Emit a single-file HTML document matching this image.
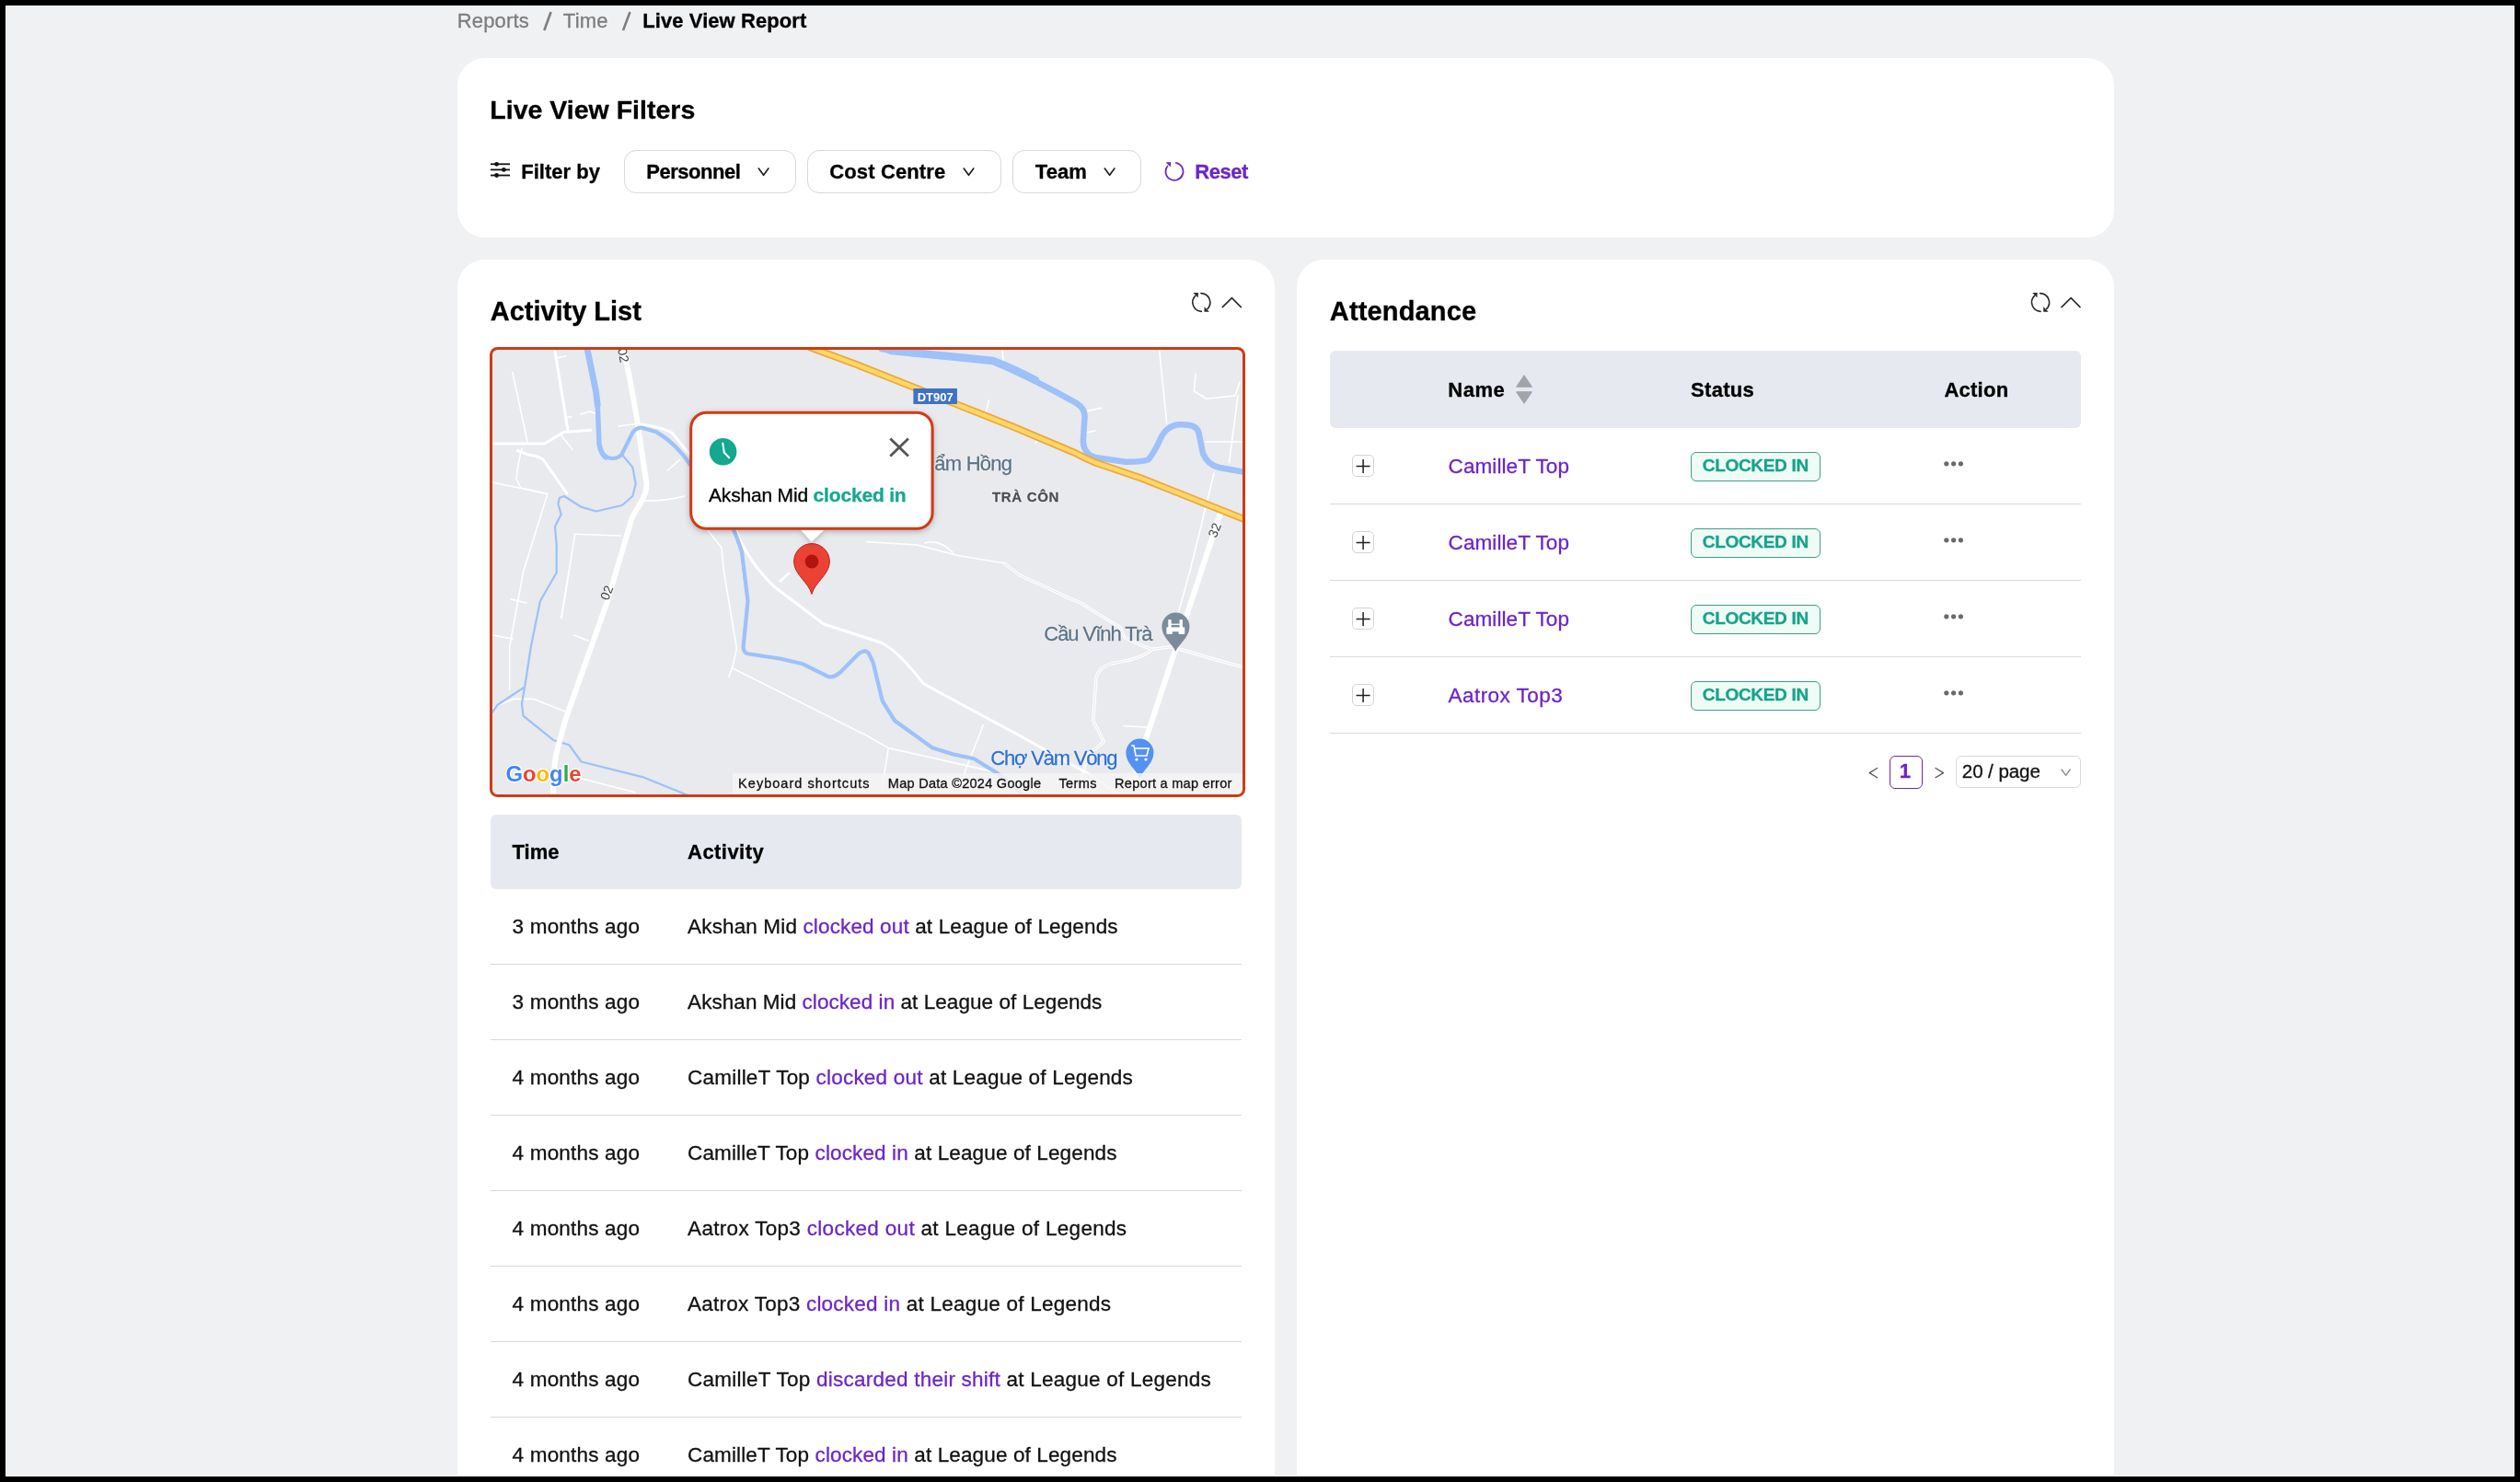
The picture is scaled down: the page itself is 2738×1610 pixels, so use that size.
<!DOCTYPE html>
<html><head><meta charset="utf-8">
<style>
html,body{margin:0;padding:0;}
body{width:2738px;height:1610px;background:#000;position:relative;overflow:hidden;font-family:'Liberation Sans',sans-serif;}
#pg{will-change:transform;position:absolute;left:0;top:0;width:2738px;height:1610px;background:#f0f1f3;clip-path:inset(7px 7px 7px 7px);overflow:hidden;}
#fr{position:absolute;left:6px;top:6px;width:2726px;height:1598px;box-sizing:border-box;border:1px solid #fff;}
.t{position:absolute;line-height:0;white-space:nowrap;-webkit-text-stroke:0.3px currentColor;font-family:'Liberation Sans',sans-serif;}
.abs{position:absolute;}
.card{position:absolute;background:#fff;border-radius:30px;}
.btn{position:absolute;box-sizing:border-box;border:1.5px solid #d9d9d9;border-radius:13px;background:#fff;height:47px;top:162.5px;}
.hdr{position:absolute;background:#e6eaf0;border-radius:6px;}
.dv{position:absolute;height:1.2px;background:#dadada;}
.pbox{position:absolute;box-sizing:border-box;width:24px;height:23.5px;border:1.2px solid #d4d4d4;border-radius:5px;background:#fff;}
.badge{position:absolute;box-sizing:border-box;width:141px;height:32px;border:1.6px solid #3f9d8c;border-radius:6px;background:#effcf6;}
svg{position:absolute;overflow:visible;}
</style></head><body>
<div id="pg">
<svg style="left:0;top:0" width="1" height="1"><g stroke="#7d7d7d" stroke-width="2.6" stroke-linecap="butt"><line x1="591.3" y1="33" x2="598.6" y2="13"/><line x1="677" y1="33" x2="684.5" y2="13"/></g></svg>
<!-- filter card -->
<div class="card" style="left:497px;top:63px;width:1800px;height:195px;"></div>
<svg style="left:0;top:0" width="1" height="1">
 <g stroke="#111" stroke-width="1.8" fill="none">
  <line x1="533" y1="178.3" x2="554" y2="178.3"/>
  <line x1="533" y1="184.4" x2="554" y2="184.4"/>
  <line x1="533" y1="190.5" x2="554" y2="190.5"/>
 </g>
 <g fill="#111">
  <circle cx="539.6" cy="178.3" r="2.4"/>
  <circle cx="547.4" cy="184.4" r="2.4"/>
  <circle cx="539.6" cy="190.5" r="2.4"/>
 </g>
</svg>
<div class="btn" style="left:678px;width:186.6px;"></div>
<div class="btn" style="left:877.3px;width:210.4px;"></div>
<div class="btn" style="left:1100px;width:140.4px;"></div>
<svg style="left:0;top:0" width="1" height="1">
 <g stroke="#1a1a1a" stroke-width="1.6" fill="none" stroke-linecap="round" stroke-linejoin="round">
  <polyline points="824.3,183 829.6,190.3 834.9,183"/>
  <polyline points="1047.2,183 1052.5,190.3 1057.8,183"/>
  <polyline points="1200.3,183 1205.6,190.3 1210.9,183"/>
 </g>
 <!-- reset icon -->
 <path d="M1277.2,176.9 A9.5,9.5 0 1 1 1268.9,180.0" stroke="#6d26c6" stroke-width="1.8" fill="none"/>
 <polygon points="1266.6,176.2 1272.2,176.2 1271.8,181.6" fill="#6d26c6"/>
</svg>

<!-- activity card -->
<div class="card" style="left:497px;top:282px;width:888px;height:1450px;"></div>
<!-- attendance card -->
<div class="card" style="left:1409px;top:282px;width:888px;height:1450px;"></div>

<svg style="left:0;top:0" width="1" height="1">
 <defs>
  <g id="rf">
   <path d="M9.6,0.6 A10,10 0 0 1 16.6,17.6" stroke="#2b2b2b" stroke-width="1.6" fill="none" stroke-linecap="round"/>
   <path d="M10,20.4 A10,10 0 0 1 3.4,3.4" stroke="#2b2b2b" stroke-width="1.6" fill="none" stroke-linecap="round"/>
   <polygon points="1.2,0.1 6.6,0.1 6.4,5.6" fill="#2b2b2b"/>
   <polygon points="13.2,15.2 13.2,20.7 18.6,20.7" fill="#2b2b2b"/>
  </g>
  <polyline id="cu" points="0,10 10.1,0 20,10" stroke="#2b2b2b" stroke-width="1.6" fill="none" stroke-linecap="round" stroke-linejoin="round"/>
 </defs>
 <use href="#rf" x="1295.3" y="318"/>
 <use href="#cu" x="1328.3" y="323.6"/>
 <use href="#rf" x="2207" y="318"/>
 <use href="#cu" x="2240" y="323.6"/>
</svg>

<svg style="left:532px;top:377px" width="821" height="489" viewBox="532 377 821 489">
 <defs>
  <clipPath id="mc"><rect x="532" y="377" width="821" height="489" rx="8" ry="8"/></clipPath>
  <filter id="sh" x="-10%" y="-10%" width="120%" height="130%"><feDropShadow dx="0" dy="2" stdDeviation="3" flood-color="#000" flood-opacity="0.25"/></filter>
 </defs>
 <g clip-path="url(#mc)">
  <rect x="532" y="377" width="821" height="489" fill="#e8eaed"/>
  <!-- thin roads -->
  <g stroke="#fff" stroke-width="1.6" fill="none" stroke-linejoin="round" stroke-linecap="round">
   
   <path d="M556.8,404.3 L573.3,481.2"/>
   
   <path d="M609.7,472.9 L622.1,488.6"/>
   <path d="M603,389 L615,387"/>
   <path d="M614,453 L621,453"/>
   
   <path d="M567,487 Q565,495 563,505 L561,520 L566,530 L594.8,536.5 L568.4,622 L553.6,703 L553.6,749.5"/>
   <path d="M535,524 L594.8,536.5"/>
   <path d="M624.6,580.3 L674.2,582"/>
   <path d="M624.6,580.3 L618,622 L610,671"/>
   <path d="M697.3,544 Q720,545 743.6,539"/>
   <path d="M725.4,511 L738.6,499.3"/>
   <path d="M672,463 L695,460"/>
   
   <path d="M618.3,620 L610,671.5"/>
   <path d="M631,450 L641,447 L649,450"/>
   <path d="M535,769 L556.9,759.4 L580.1,759.4 L613.4,772.7"/>
   <path d="M631.6,845.8 L689.7,860.7"/>
   <path d="M535,690 L557,694"/>
   <path d="M555,651 L572,655"/>
   <path d="M624,690 L639,696"/>
   <path d="M769,576 L784,595 L786,618 L800.4,704.5 L796.2,723.1 L792,735"/>
   <path d="M796,726 L942,799.3 L965.2,812.6 L1083.1,839.1 L1130,866"/>
   <path d="M965.2,812.6 L957,866"/>
   <path d="M1068.2,787.7 L1041.6,855.7"/>
   
   
   
   <path d="M1220.9,788.5 L1247.4,790.2"/>
   <path d="M942,588.6 L996.6,592 L1041,603.5 L1090.8,611.7"/>
   <path d="M1259.4,378 L1267.7,459.7"/>
   <path d="M1299,406.8 L1297.4,425 L1310.7,433.2 L1342,429.9 L1347,415"/>
   <path d="M1345,430 L1335.5,502.6"/>
   <path d="M1319,514.2 L1292.5,622 L1280.6,664.8"/>
   <path d="M1089,378 L1090,392"/>
   <path d="M1074.3,434.9 L1071,449.7"/>
   <path d="M1181.7,446.4 L1196.6,443.1"/>
   <path d="M1310,480 L1353,480"/>
   <path d="M1180,470 L1190,468"/>
   <path d="M1127,478 L1125,482"/>
   <path d="M1005,590 Q1020,585 1035,600"/>
  </g>
  <g fill="none" stroke-linejoin="round" stroke-linecap="round">
   <path d="M1091.4,612 L1108,625 L1141.2,640 L1161.6,650 L1175.5,655.5 L1194,667.6 L1217,681.4 L1221.7,692.5 L1235.5,699 L1251.2,705.5 Q1245,714 1214.2,719.6 Q1195,722 1191,736.2 L1187.7,782.7 L1199.3,806 L1182.7,819.2 L1175,845 M1251.2,705.5 L1271.6,702.7 L1282.7,705.5 L1332.6,720 L1356,726" stroke="#fff" stroke-width="3.4"/>
   <path d="M1091.4,612 L1108,625 L1141.2,640 L1161.6,650 L1175.5,655.5 L1194,667.6 L1217,681.4 L1221.7,692.5 L1235.5,699 L1251.2,705.5 Q1245,714 1214.2,719.6 Q1195,722 1191,736.2 L1187.7,782.7 L1199.3,806 L1182.7,819.2 L1175,845 M1251.2,705.5 L1271.6,702.7 L1282.7,705.5 L1332.6,720 L1356,726" stroke="#e8eaed" stroke-width="1.1"/>
  </g>
  <g stroke="#fff" stroke-width="3" fill="none" stroke-linejoin="round" stroke-linecap="round">
   <path d="M533,482 L591.3,482 Q600,477 612.3,469.6 L641.9,467.2"/>
   <path d="M602.4,378 L617.2,468.4"/>
   <path d="M693.8,461 Q712,462 729.6,469.6 L752,497"/>
   <path d="M562,489.5 L574,494 Q583,495 590,499 L606,522 L616,536"/>
  </g>
  <!-- thin stream -->
  <g stroke="#9dc1f8" stroke-width="2.2" fill="none" stroke-linejoin="round" stroke-linecap="round">
   <path d="M676,494 L687.4,507.6 L690.7,525.8 L687.4,539 L675.8,549 L647.7,555.5 L631.2,550.6 L613,539 L608,540.7 L606.4,547.3 L609.7,558.8 L603,572 L604.7,592 L604.7,622 L586.8,653.2 L576.8,703 L570.2,746.2 L540.3,766 L532,778"/>
   <path d="M570,747 L566.9,764.4 L568.5,777.7 L601.7,804.3 L618.3,809.2 L631.6,827.5 L698,844.1 L739.5,860.7 L752,866"/>
  </g>
  <!-- main roads -->
  <g stroke="#fff" stroke-width="6" fill="none" stroke-linejoin="round" stroke-linecap="round">
   <path d="M677,377 L684,410 L690.5,446 L702,522 Q704,532 697,545 L686.8,562 L660,653 L614.6,781 L604,820 Q601,840 601,870"/>
   <path d="M1326,557 L1305,621 L1244,806 L1232,850"/>
  </g>
    <path d="M798,572 Q812,610 842,638 L895,678 L957,698 Q975,706 1003.4,742.8 L1108,799.3 L1182.7,840.8 L1220,866 M847,632 L858,622" stroke="#fff" stroke-width="3" fill="none" stroke-linejoin="round"/>
  
  <!-- rivers -->
  <g stroke="#9dc1f8" stroke-width="5" fill="none" stroke-linejoin="round" stroke-linecap="round">
   <path d="M637.8,377 L647.7,426.6 L649.4,443 L651,482.8 Q654,497 664.3,498 Q673,498 676,492.7 L687.4,469.6 Q692,464 697.3,464.6 L713.8,469.6 Q735,482 750,505 L790,560 Q800,580 806,600 L812.5,653 L807.6,703 Q808,710 814.2,710.5 L847.4,715.5 L872.3,721.3 L900.5,735.4 Q907,736 913.8,729.6 L933.7,709.6 Q940,705 944,710 L948.6,719.6 L958.6,761.1 L971.9,782.7 L1013.4,812.6 L1035,819.2 L1058.2,824.2 L1084.8,840.8 L1115,866" stroke-width="4.2"/>
   <path d="M955,377 L968.5,382 L1077.6,391.9 Q1120,410 1170,438.2 Q1180,445 1178.4,454.7 L1176.8,479.5 Q1178,494 1190,497 L1223,501.8 Q1240,502 1247.8,499.3 Q1255,490 1261,476.2 Q1268,462 1280.9,461.3 Q1300,460 1302.4,470 L1307,492.7 Q1312,505 1325,508 L1353,513" stroke-width="6.5"/>
  </g>
  <path d="M958,378 L990,383 L1040,388 L1079,392 Q1100,400 1125,413" stroke="#9dc1f8" stroke-width="8.5" fill="none" stroke-linecap="round"/>
  <path d="M637.5,376 L647.7,426.6 L649.2,440" stroke="#9dc1f8" stroke-width="6.8" fill="none" stroke-linecap="round"/>
  <path d="M648.5,432 L649.4,443 L651,482.8 Q653,493 658,497" stroke="#9dc1f8" stroke-width="5.4" fill="none" stroke-linecap="round"/>
  <!-- highway -->
  <path d="M879,377 L930,395.8 L1100,463.3 L1168,492 Q1178,497.5 1190,502.5 L1240,519.5 L1353,564.5" stroke="#f0a73a" stroke-width="8" fill="none" stroke-linejoin="round"/>
  <path d="M879,377 L930,395.8 L1100,463.3 L1168,492 Q1178,497.5 1190,502.5 L1240,519.5 L1353,564.5" stroke="#fdd767" stroke-width="4.5" fill="none" stroke-linejoin="round"/>
  <!-- DT907 shield -->
  <rect x="992.4" y="422" width="47.5" height="17" fill="#3e72c4"/>
  <text x="1016.2" y="435.5" font-family="Liberation Sans" font-weight="700" font-size="13" fill="#fff" text-anchor="middle">DT907</text>
  <!-- road labels -->
  <text x="0" y="0" font-family="Liberation Sans" font-size="14" fill="#444" text-anchor="middle" transform="translate(659,644) rotate(-68) translate(0,5)">02</text>
  <text x="0" y="0" font-family="Liberation Sans" font-size="14" fill="#444" text-anchor="middle" transform="translate(677.5,386) rotate(79) translate(0,5)">02</text>
  <text x="0" y="0" font-family="Liberation Sans" font-size="14" fill="#444" text-anchor="middle" transform="translate(1319.5,576) rotate(-68) translate(0,5)">32</text>
  <!-- POIs -->
  <g>
   <path d="M1277.4,708 C1274,699 1262.4,693 1262.4,680.5 A15,15 0 1 1 1292.4,680.5 C1292.4,693 1281,699 1277.4,708 Z" fill="#7b8c99"/>
   <g fill="#fff"><rect x="1269.3" y="673.1" width="3.3" height="15.7"/><rect x="1281.6" y="673.1" width="3.3" height="15.7"/><rect x="1267.4" y="681.4" width="19.8" height="4.8"/><rect x="1267.4" y="686" width="6.4" height="2.8"/><rect x="1280.6" y="686" width="6.6" height="2.8"/><rect x="1272" y="677.6" width="10" height="1.3"/></g>
   <path d="M1238.4,845.8 C1235,836 1223.4,830 1223.4,817.5 A15,15 0 1 1 1253.4,817.5 C1253.4,830 1242,836 1238.4,845.8 Z" fill="#5491f0"/>
   <g fill="#fff"><path d="M1229,810 L1232,810 L1234,821 L1246,821 L1248,813 L1233,813" stroke="#fff" stroke-width="1.6" fill="none"/><circle cx="1235" cy="825" r="1.6"/><circle cx="1245" cy="825" r="1.6"/></g>
  </g>
  <!-- footer band -->
  <rect x="796" y="840" width="560" height="26" fill="#f4f4f4" fill-opacity="0.85"/>
  <!-- google logo -->
  <text x="549.5" y="848.5" font-family="Liberation Sans" font-size="24.5" font-weight="700" stroke="#fff" stroke-width="2.5" stroke-linejoin="round" paint-order="stroke" textLength="82" lengthAdjust="spacingAndGlyphs"><tspan fill="#4285f4">G</tspan><tspan fill="#ea4335">o</tspan><tspan fill="#fbbc05">o</tspan><tspan fill="#4285f4">g</tspan><tspan fill="#34a853">l</tspan><tspan fill="#ea4335">e</tspan></text>
  <!-- marker -->
  <path d="M882,645.5 C879,633 862.6,624 862.6,610 A19.4,19.4 0 1 1 901.4,610 C901.4,624 885,633 882,645.5 Z" fill="#ea4335" stroke="#c5221f" stroke-width="1"/>
  <circle cx="882" cy="610" r="7.4" fill="#b3140f"/>
  <!-- popup -->
  <g filter="url(#sh)">
   <path d="M870.6,576 L881.7,588.4 L895,576 Z" fill="#fff"/>
   <rect x="750.7" y="448.2" width="262.4" height="126.1" rx="17" ry="17" fill="#fff" stroke="#d03a16" stroke-width="3"/>
  </g>
  <circle cx="785.6" cy="490.8" r="14.8" fill="#14a88e"/>
  <path d="M785.3,481.4 L786.8,491.5 L792.2,497.3" stroke="#fff" stroke-width="2" fill="none" stroke-linecap="round" stroke-linejoin="round"/>
  <g stroke="#555" stroke-width="2.8"><line x1="967.3" y1="476.6" x2="986.9" y2="495.6"/><line x1="986.9" y1="476.6" x2="967.3" y2="495.6"/></g>
 </g>
 <rect x="533.5" y="378.5" width="818" height="486" rx="7" ry="7" fill="none" stroke="#d03a16" stroke-width="3"/>
</svg>


<!-- activity table -->
<div class="hdr" style="left:533px;top:885px;width:816px;height:81px;"></div>
<div class="dv" style="left:533px;width:816px;top:1047px"></div>
<div class="dv" style="left:533px;width:816px;top:1129px"></div>
<div class="dv" style="left:533px;width:816px;top:1211px"></div>
<div class="dv" style="left:533px;width:816px;top:1293px"></div>
<div class="dv" style="left:533px;width:816px;top:1375px"></div>
<div class="dv" style="left:533px;width:816px;top:1457px"></div>
<div class="dv" style="left:533px;width:816px;top:1539px"></div>

<!-- attendance table -->
<div class="hdr" style="left:1445px;top:381px;width:816px;height:84px;"></div>
<svg style="left:0;top:0" width="1" height="1">
 <path d="M1656,408 L1664.2,420.2 L1647.8,420.2 Z" fill="#a3a4a8" stroke="#a3a4a8" stroke-width="1.2" stroke-linejoin="round"/>
 <path d="M1656,438 L1664.2,425.8 L1647.8,425.8 Z" fill="#a3a4a8" stroke="#a3a4a8" stroke-width="1.2" stroke-linejoin="round"/>
</svg>
<div class="dv" style="left:1445px;width:816px;top:547px"></div>
<div class="dv" style="left:1445px;width:816px;top:630px"></div>
<div class="dv" style="left:1445px;width:816px;top:713px"></div>
<div class="dv" style="left:1445px;width:816px;top:796px"></div>

<div class="pbox" style="left:1469.2px;top:494.3px"></div>
<div class="pbox" style="left:1469.2px;top:577.3px"></div>
<div class="pbox" style="left:1469.2px;top:660.3px"></div>
<div class="pbox" style="left:1469.2px;top:743.3px"></div>
<svg style="left:0;top:0" width="1" height="1">
 <defs>
  <g id="pl" stroke="#1f1f1f" stroke-width="1.5"><line x1="1473.6" y1="506.5" x2="1488.6" y2="506.5"/><line x1="1481.1" y1="499" x2="1481.1" y2="514"/></g>
  <g id="el" fill="#6a6a6a"><circle cx="2114.8" cy="503.8" r="2.6"/><circle cx="2122.6" cy="503.8" r="2.6"/><circle cx="2130.4" cy="503.8" r="2.6"/></g>
 </defs>
 <use href="#pl"/><use href="#pl" y="83"/><use href="#pl" y="166"/><use href="#pl" y="249"/>
 <use href="#el"/><use href="#el" y="83"/><use href="#el" y="166"/><use href="#el" y="249"/>
</svg>
<div class="badge" style="left:1837px;top:491px"></div>
<div class="badge" style="left:1837px;top:574px"></div>
<div class="badge" style="left:1837px;top:657px"></div>
<div class="badge" style="left:1837px;top:740px"></div>

<!-- pagination -->
<div class="abs" style="left:2053px;top:821px;width:36px;height:35.6px;box-sizing:border-box;border:1.3px solid #6d26c6;border-radius:6px;background:#fff"></div>
<div class="abs" style="left:2125.4px;top:821.4px;width:135.2px;height:35px;box-sizing:border-box;border:1.3px solid #d9d9d9;border-radius:6px;background:#fff"></div>
<svg style="left:0;top:0" width="1" height="1">
 <g stroke="#555" stroke-width="1.3" fill="none" stroke-linecap="round" stroke-linejoin="round">
  <polyline points="2039.6,834.5 2031.2,839.6 2039.6,844.8"/>
  <polyline points="2103,834.5 2111.5,839.6 2103,844.8"/>
  <polyline points="2240,836 2244.6,842.4 2249.2,836" stroke="#888"/>
 </g>
</svg>

<div class="t" style="left:496.8px;top:23.4px;font-size:22px;font-weight:400;color:#7d7d7d;letter-spacing:0.14px;">Reports</div>
<div class="t" style="left:611.8px;top:23.4px;font-size:22px;font-weight:400;color:#7d7d7d;letter-spacing:0.23px;">Time</div>
<div class="t" style="left:698.3px;top:23.4px;font-size:22px;font-weight:700;color:#000;letter-spacing:0.07px;">Live View Report</div>
<div class="t" style="left:532.3px;top:118.6px;font-size:28.5px;font-weight:700;color:#000;letter-spacing:0.01px;">Live View Filters</div>
<div class="t" style="left:566.3px;top:187.4px;font-size:22px;font-weight:700;color:#000;">Filter by</div>
<div class="t" style="left:702.3px;top:186.9px;font-size:22px;font-weight:700;color:#000;letter-spacing:-0.49px;">Personnel</div>
<div class="t" style="left:901.3px;top:186.9px;font-size:22px;font-weight:700;color:#000;letter-spacing:0.12px;">Cost Centre</div>
<div class="t" style="left:1124.8px;top:186.9px;font-size:22px;font-weight:700;color:#000;letter-spacing:0.04px;">Team</div>
<div class="t" style="left:1298.3px;top:186.9px;font-size:22px;font-weight:700;color:#6d26c6;letter-spacing:-0.48px;">Reset</div>
<div class="t" style="left:532.8px;top:337.9px;font-size:29px;font-weight:700;color:#000;letter-spacing:-0.03px;">Activity List</div>
<div class="t" style="left:556.6px;top:926.4px;font-size:22px;font-weight:700;color:#000;letter-spacing:-0.06px;">Time</div>
<div class="t" style="left:747.1px;top:926.4px;font-size:22px;font-weight:700;color:#000;letter-spacing:0.44px;">Activity</div>
<div class="t" style="left:556.6px;top:1007.0px;font-size:22.5px;font-weight:400;color:#111;letter-spacing:0.18px;">3 months ago</div>
<div class="t" style="left:747.1px;top:1007.0px;font-size:22.5px;font-weight:400;color:#111;letter-spacing:0.14px;">Akshan Mid <span style="color:#6d26c6">clocked out</span> at League of Legends</div>
<div class="t" style="left:556.6px;top:1089.0px;font-size:22.5px;font-weight:400;color:#111;letter-spacing:0.18px;">3 months ago</div>
<div class="t" style="left:747.1px;top:1089.0px;font-size:22.5px;font-weight:400;color:#111;letter-spacing:0.06px;">Akshan Mid <span style="color:#6d26c6">clocked in</span> at League of Legends</div>
<div class="t" style="left:556.6px;top:1171.0px;font-size:22.5px;font-weight:400;color:#111;letter-spacing:0.18px;">4 months ago</div>
<div class="t" style="left:747.1px;top:1171.0px;font-size:22.5px;font-weight:400;color:#111;letter-spacing:0.21px;">CamilleT Top <span style="color:#6d26c6">clocked out</span> at League of Legends</div>
<div class="t" style="left:556.6px;top:1253.0px;font-size:22.5px;font-weight:400;color:#111;letter-spacing:0.18px;">4 months ago</div>
<div class="t" style="left:747.1px;top:1253.0px;font-size:22.5px;font-weight:400;color:#111;letter-spacing:0.13px;">CamilleT Top <span style="color:#6d26c6">clocked in</span> at League of Legends</div>
<div class="t" style="left:556.6px;top:1335.0px;font-size:22.5px;font-weight:400;color:#111;letter-spacing:0.18px;">4 months ago</div>
<div class="t" style="left:747.1px;top:1335.0px;font-size:22.5px;font-weight:400;color:#111;letter-spacing:0.31px;">Aatrox Top3 <span style="color:#6d26c6">clocked out</span> at League of Legends</div>
<div class="t" style="left:556.6px;top:1417.0px;font-size:22.5px;font-weight:400;color:#111;letter-spacing:0.18px;">4 months ago</div>
<div class="t" style="left:747.1px;top:1417.0px;font-size:22.5px;font-weight:400;color:#111;letter-spacing:0.24px;">Aatrox Top3 <span style="color:#6d26c6">clocked in</span> at League of Legends</div>
<div class="t" style="left:556.6px;top:1499.0px;font-size:22.5px;font-weight:400;color:#111;letter-spacing:0.18px;">4 months ago</div>
<div class="t" style="left:747.1px;top:1499.0px;font-size:22.5px;font-weight:400;color:#111;letter-spacing:0.24px;">CamilleT Top <span style="color:#6d26c6">discarded their shift</span> at League of Legends</div>
<div class="t" style="left:556.6px;top:1581.0px;font-size:22.5px;font-weight:400;color:#111;letter-spacing:0.18px;">4 months ago</div>
<div class="t" style="left:747.1px;top:1581.0px;font-size:22.5px;font-weight:400;color:#111;letter-spacing:0.13px;">CamilleT Top <span style="color:#6d26c6">clocked in</span> at League of Legends</div>
<div class="t" style="left:1444.8px;top:337.9px;font-size:29px;font-weight:700;color:#000;letter-spacing:0.16px;">Attendance</div>
<div class="t" style="left:1573.3px;top:423.9px;font-size:22px;font-weight:700;color:#000;letter-spacing:0.52px;">Name</div>
<div class="t" style="left:1837.1px;top:423.9px;font-size:22px;font-weight:700;color:#000;letter-spacing:0.29px;">Status</div>
<div class="t" style="left:2112.4px;top:423.9px;font-size:22px;font-weight:700;color:#000;letter-spacing:0.26px;">Action</div>
<div class="t" style="left:1573.6px;top:506.7px;font-size:22.5px;font-weight:400;color:#6d26c6;letter-spacing:0.08px;">CamilleT Top</div>
<div class="t" style="left:1849.8px;top:506.4px;font-size:19px;font-weight:700;color:#17a38b;letter-spacing:-0.32px;">CLOCKED IN</div>
<div class="t" style="left:1573.6px;top:589.7px;font-size:22.5px;font-weight:400;color:#6d26c6;letter-spacing:0.08px;">CamilleT Top</div>
<div class="t" style="left:1849.8px;top:589.4px;font-size:19px;font-weight:700;color:#17a38b;letter-spacing:-0.32px;">CLOCKED IN</div>
<div class="t" style="left:1573.6px;top:672.7px;font-size:22.5px;font-weight:400;color:#6d26c6;letter-spacing:0.08px;">CamilleT Top</div>
<div class="t" style="left:1849.8px;top:672.4px;font-size:19px;font-weight:700;color:#17a38b;letter-spacing:-0.32px;">CLOCKED IN</div>
<div class="t" style="left:1573.6px;top:755.7px;font-size:22.5px;font-weight:400;color:#6d26c6;letter-spacing:0.44px;">Aatrox Top3</div>
<div class="t" style="left:1849.8px;top:755.4px;font-size:19px;font-weight:700;color:#17a38b;letter-spacing:-0.32px;">CLOCKED IN</div>
<div class="t" style="left:2063.8px;top:838.2px;font-size:22px;font-weight:700;color:#6d26c6;">1</div>
<div class="t" style="left:2131.8px;top:837.9px;font-size:20.5px;font-weight:400;color:#111;letter-spacing:-0.06px;">20 / page</div>
<div class="t" style="left:770.0px;top:537.7px;font-size:21px;font-weight:400;color:#000;letter-spacing:-0.18px;">Akshan Mid <b style="color:#14a88e">clocked in</b></div>
<div class="t" style="left:1015.3px;top:504.4px;font-size:22px;font-weight:400;color:#5d7486;letter-spacing:-0.75px;text-shadow:0 0 2px #fff,0 0 2px #fff;">ẩm Hồng</div>
<div class="t" style="left:1078.0px;top:539.8px;font-size:15px;font-weight:700;color:#4a4f55;letter-spacing:0.67px;text-shadow:0 0 2px #fff,0 0 2px #fff;">TRÀ CÔN</div>
<div class="t" style="left:1134.3px;top:689.4px;font-size:22px;font-weight:400;color:#5d7486;letter-spacing:-1.05px;text-shadow:0 0 2px #fff,0 0 2px #fff;">Cầu Vĩnh Trà</div>
<div class="t" style="left:1076.3px;top:823.9px;font-size:22px;font-weight:400;color:#2f6fd8;letter-spacing:-1.20px;text-shadow:0 0 2px #fff,0 0 2px #fff;">Chợ Vàm Vòng</div>
<div class="t" style="left:802.1px;top:851.3px;font-size:14.5px;font-weight:400;color:#111;letter-spacing:1.03px;">Keyboard shortcuts</div>
<div class="t" style="left:964.8px;top:851.3px;font-size:14.5px;font-weight:400;color:#111;letter-spacing:0.28px;">Map Data ©2024 Google</div>
<div class="t" style="left:1150.4px;top:851.3px;font-size:14.5px;font-weight:400;color:#111;letter-spacing:0.40px;">Terms</div>
<div class="t" style="left:1211.1px;top:851.3px;font-size:14.5px;font-weight:400;color:#111;letter-spacing:0.28px;">Report a map error</div>
</div>
<div id="fr"></div>
</body></html>
